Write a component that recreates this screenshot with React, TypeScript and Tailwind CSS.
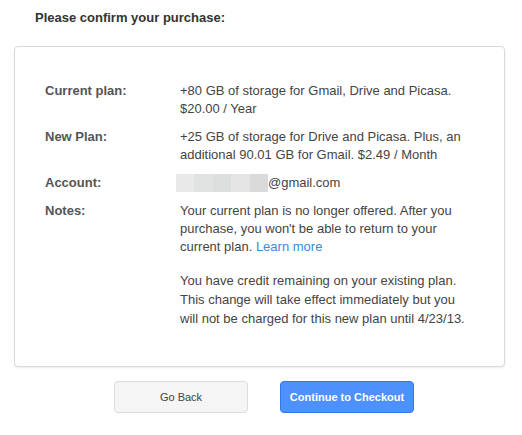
export default function App() {
  const rows: { label: string; value: React.ReactNode }[] = [
    { label: "Current plan:", value: <p>+80 GB of storage for Gmail, Drive and Picasa. $20.00 / Year</p> },
    {
      label: "New Plan:",
      value: <p>+25 GB of storage for Drive and Picasa. Plus, an additional 90.01 GB for Gmail. $2.49 / Month</p>,
    },
    {
      label: "Account:",
      value: (
        <p className="-ml-[4px] flex items-center">
          <span className="inline-flex h-[18px] w-[92px]">
            <span className="flex-1 bg-[#e9e9e9]" />
            <span className="flex-1 bg-[#e1e2e2]" />
            <span className="flex-1 bg-[#dddfdf]" />
            <span className="flex-1 bg-[#e5e5e5]" />
            <span className="flex-1 bg-[#dadada]" />
          </span>
          <span>@gmail.com</span>
        </p>
      ),
    },
    {
      label: "Notes:",
      value: (
        <div>
          <p>
            Your current plan is no longer offered. After you purchase, you won't be able to return to your current plan.{" "}
            <a className="text-[#3b8ad6]">Learn more</a>
          </p>
          <p className="mt-[15px] leading-[19px]">
            You have credit remaining on your existing plan. This change will take effect immediately but you will not be charged for this new plan until 4/23/13.
          </p>
        </div>
      ),
    },
  ];

  return (
    <div className="w-[522px] h-[435px] bg-white font-['Liberation_Sans',Arial,sans-serif] text-[13px] leading-[18px] text-[#444]">
      <h1 className="pl-[35px] pt-[9px] font-bold text-[13px] leading-[18px] text-[#333]">Please confirm your purchase:</h1>

      <div className="ml-[14px] mt-[19px] w-[491px] rounded-[4px] border border-[#d9d9d9] bg-white pt-[35px] pb-[38px] pl-[30px] pr-[30px] shadow-[0_1px_2px_rgba(0,0,0,0.08)]">
        <div className="grid grid-cols-[135px_290px] gap-y-[10px]">
          {rows.map((r) => (
            <div key={r.label} className="contents">
              <div className="font-bold text-[#555]">{r.label}</div>
              <div>{r.value}</div>
            </div>
          ))}
        </div>
      </div>

      <div className="mt-[14px] flex justify-center gap-[32px] pl-[6px]">
        <button className="h-[32px] w-[134px] rounded-[4px] border border-[#dcdcdc] bg-[#f5f5f5] text-[11px] text-[#444]">
          Go Back
        </button>
        <button className="h-[32px] w-[134px] rounded-[4px] border border-[#3079ed] bg-[#4d90fe] text-[11px] font-bold text-white">
          Continue to Checkout
        </button>
      </div>
    </div>
  );
}
